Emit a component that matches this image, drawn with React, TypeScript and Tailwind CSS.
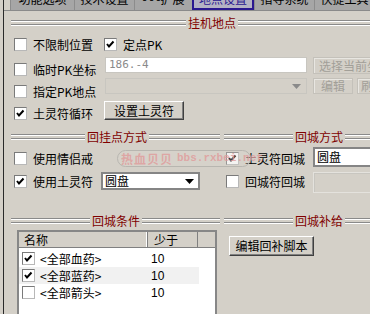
import React from "react";

const Check = ({ checked = false }: { checked?: boolean }) => (
  <span className="w-[13px] h-[13px] shrink-0 bg-white border border-t-[#7a7a7a] border-l-[#7a7a7a] border-r-[#b8b8b8] border-b-[#b8b8b8] flex items-center justify-center">
    {checked && (
      <svg width="11" height="11" viewBox="0 0 11 11">
        <path d="M2 5 L4 7.5 L8.5 2.5" fill="none" stroke="#000" strokeWidth="2" />
      </svg>
    )}
  </span>
);

const Lines = () => (
  <div className="flex flex-col gap-[2px]">
    <div className="h-[2px] border-t border-t-[#8a8a8a] border-b border-b-white" />
    <div className="h-[2px] border-t border-t-[#8a8a8a] border-b border-b-white" />
  </div>
);

const Header = ({ label, left }: { label: string; left: string }) => (
  <div className="flex items-center h-[14px]">
    <div className={`${left} shrink-0`}>
      <Lines />
    </div>
    <span className="px-[2px] text-[#800000] text-[12px] leading-[14px] whitespace-nowrap">{label}</span>
    <div className="flex-1">
      <Lines />
    </div>
  </div>
);

const Label = ({ text }: { text: string }) => (
  <span className="ml-[6px] shrink-0 text-[12px] leading-[13px] whitespace-nowrap text-black">{text}</span>
);

const Btn = ({ text, className, disabled = false }: { text: string; className: string; disabled?: boolean }) =>
  disabled ? (
    <div className={`shrink-0 flex items-center border border-[#c4c1ba] shadow-[inset_1px_1px_0_#e8e6e1] text-[12px] text-[#a29f98] whitespace-nowrap overflow-hidden ${className}`}>
      {text}
    </div>
  ) : (
    <div className={`shrink-0 flex items-center justify-center border border-t-white border-l-white border-r-[#404040] border-b-[#404040] shadow-[inset_-1px_-1px_0_#808080] text-[12px] text-black whitespace-nowrap ${className}`}>
      {text}
    </div>
  );

const Arrow = ({ color }: { color: string }) => (
  <svg width="9" height="5" viewBox="0 0 9 5">
    <path d="M0 0 H9 L4.5 5 Z" fill={color} />
  </svg>
);

const tabs = [
  { label: "功能选项", w: "w-[64px]" },
  { label: "技术设置", w: "w-[60px]" },
  { label: "- - -扩展", w: "w-[58px]" },
  { label: "地点设置", w: "w-[62px]", active: true },
  { label: "指导系统", w: "w-[60px]" },
  { label: "快捷工具", w: "w-[60px]" },
];

const items = [
  { name: "<全部血药>", n: "10", checked: true },
  { name: "<全部蓝药>", n: "10", checked: true, hl: true },
  { name: "<全部箭头>", n: "10", checked: false },
];

export default function App() {
  return (
    <div className="w-[370px] h-[314px] overflow-hidden flex bg-[#d4d0c8] font-['Noto_Sans_CJK_SC',sans-serif]">
      <div className="w-[3px] shrink-0" />
      <div className="w-[1px] shrink-0 bg-[#2a2a2a]" />
      <div className="relative flex-1 min-w-0 overflow-hidden">
        {/* tabs */}
        <div className="flex h-[11px] border-b border-[#8a8a8a] bg-[#a6a6a6] overflow-hidden">
          <div className="w-[6px] shrink-0 bg-[#d4d0c8]" />
          {tabs.map((t) => (
            <div
              key={t.label}
              className={`${t.w} shrink-0 flex justify-center overflow-hidden ${
                t.active ? "border-2 border-t-0 border-[#2a1890] bg-[#b4b2c4] text-[#2a1890]" : "border-l border-[#8c8c8c] text-black"
              }`}
            >
              <span className="text-[12px] leading-[12px] -mt-[7px] whitespace-nowrap">{t.label}</span>
            </div>
          ))}
        </div>

        <div className="ml-[7px] mt-[5px]">
          <Header label="挂机地点" left="w-[175px]" />
        </div>

        {/* row 1 */}
        <div className="flex items-center h-[13px] mt-[8px] pl-[10px]">
          <div className="w-[90px] shrink-0 flex items-center">
            <Check />
            <Label text="不限制位置" />
          </div>
          <Check checked />
          <Label text="定点PK" />
        </div>

        {/* row 2 */}
        <div className="flex items-start h-[17px] mt-[6px] pl-[10px]">
          <div className="w-[91px] shrink-0 flex items-center mt-[6px]">
            <Check />
            <Label text="临时PK坐标" />
          </div>
          <div className="w-[202px] h-[16px] shrink-0 bg-white border border-[#c8c6c0] flex items-center pl-[3px] text-[11px] text-[#8a8a8a] font-['DejaVu_Sans_Mono',monospace]">
            186.-4
          </div>
          <Btn disabled text="选择当前坐标" className="ml-[6px] w-[80px] h-[17px] pl-[5px]" />
        </div>

        {/* row 3 */}
        <div className="flex items-start h-[16px] mt-[4px] pl-[10px]">
          <div className="w-[91px] shrink-0 flex items-center mt-[7px]">
            <Check />
            <Label text="指定PK地点" />
          </div>
          <div className="w-[202px] h-[16px] shrink-0 border border-[#c8c6c0] flex items-center justify-end pr-[5px]">
            <Arrow color="#8a8a8a" />
          </div>
          <Btn disabled text="编辑" className="ml-[6px] w-[40px] h-[16px] justify-center" />
          <Btn disabled text="刷新" className="ml-[4px] w-[40px] h-[16px] pl-[3px]" />
        </div>

        {/* row 4 */}
        <div className="flex items-start h-[19px] mt-[7px] pl-[10px]">
          <div className="w-[90px] shrink-0 flex items-center mt-[6px]">
            <Check checked />
            <Label text="土灵符循环" />
          </div>
          <Btn text="设置土灵符" className="w-[80px] h-[19px]" />
        </div>

        {/* section B headers */}
        <div className="flex mt-[10px] ml-[7px]">
          <div className="w-[209px] shrink-0">
            <Header label="回挂点方式" left="w-[74px]" />
          </div>
          <div className="flex-1 ml-[4px]">
            <Header label="回城方式" left="w-[69px]" />
          </div>
        </div>

        {/* row 5 */}
        <div className="flex items-start h-[20px] mt-[3px]">
          <div className="w-[222px] shrink-0 pl-[10px] flex items-center mt-[5px]">
            <Check />
            <Label text="使用情侣戒" />
          </div>
          <div className="w-[87px] shrink-0 flex items-center mt-[5px]">
            <Check checked />
            <Label text="土灵符回城" />
          </div>
          <div className="w-[70px] h-[20px] shrink-0 bg-white border-2 border-[#858585] flex items-center pl-[2px] text-[12px]">
            圆盘
          </div>
        </div>

        {/* row 6 */}
        <div className="flex items-start h-[21px] mt-[5px]">
          <div className="w-[222px] shrink-0 pl-[10px] flex items-start">
            <div className="w-[87px] shrink-0 flex items-center mt-[3px]">
              <Check checked />
              <Label text="使用土灵符" />
            </div>
            <div className="w-[99px] h-[18px] shrink-0 bg-white border-2 border-[#858585] flex items-center justify-between pl-[2px] pr-[4px] text-[12px]">
              <span>圆盘</span>
              <Arrow color="#000" />
            </div>
          </div>
          <div className="w-[87px] shrink-0 flex items-center mt-[3px]">
            <Check />
            <Label text="回城符回城" />
          </div>
          <div className="w-[70px] h-[21px] shrink-0 border border-[#e4e2dd] shadow-[inset_1px_1px_0_#c8c6c0]" />
        </div>

        {/* section C headers */}
        <div className="flex mt-[21px] ml-[7px]">
          <div className="w-[209px] shrink-0">
            <Header label="回城条件" left="w-[79px]" />
          </div>
          <div className="flex-1 ml-[4px]">
            <Header label="回城补给" left="w-[69px]" />
          </div>
        </div>

        {/* list + button */}
        <div className="flex items-start mt-[2px]">
          <div className="ml-[13px] w-[200px] h-[100px] shrink-0 bg-white border-2 border-[#878787]">
            <div className="flex h-[16px] bg-[#d4d0c8] border-b border-[#808080] text-[12px] leading-[15px]">
              <div className="w-[129px] pl-[5px] border-r border-[#808080] shadow-[inset_-1px_0_0_#ffffff]">名称</div>
              <div className="w-[50px] pl-[6px] border-r border-[#808080]">少于</div>
              <div className="flex-1" />
            </div>
            <div className="pt-[2px]">
              {items.map((it) => (
                <div key={it.name} className={`flex items-center h-[17px] w-[180px] text-[12px] ${it.hl ? "bg-[#f1f1f1]" : ""}`}>
                  <div className="w-[129px] shrink-0 flex items-center pl-[3px]">
                    <Check checked={it.checked} />
                    <span className="ml-[5px] whitespace-nowrap">{it.name}</span>
                  </div>
                  <span className="pl-[3px] font-['Liberation_Sans',sans-serif]">{it.n}</span>
                </div>
              ))}
            </div>
          </div>
          <Btn text="编辑回补脚本" className="ml-[12px] mt-[6px] w-[85px] h-[20px]" />
        </div>

        {/* watermark */}
        <div className="absolute left-[113px] top-[150px] w-[134px] h-[17px] rounded-full border border-[#b8b6b0] bg-[#dcd8d2]/30 flex items-center pl-[3px] text-[12px] font-bold text-[#e09a9a]/80 whitespace-nowrap">
          <span className="tracking-[1px]">热血贝贝</span>
          <span className="ml-[4px] font-['Liberation_Mono',monospace] text-[11px]">bbs.rxbei.net</span>
        </div>
      </div>
    </div>
  );
}
